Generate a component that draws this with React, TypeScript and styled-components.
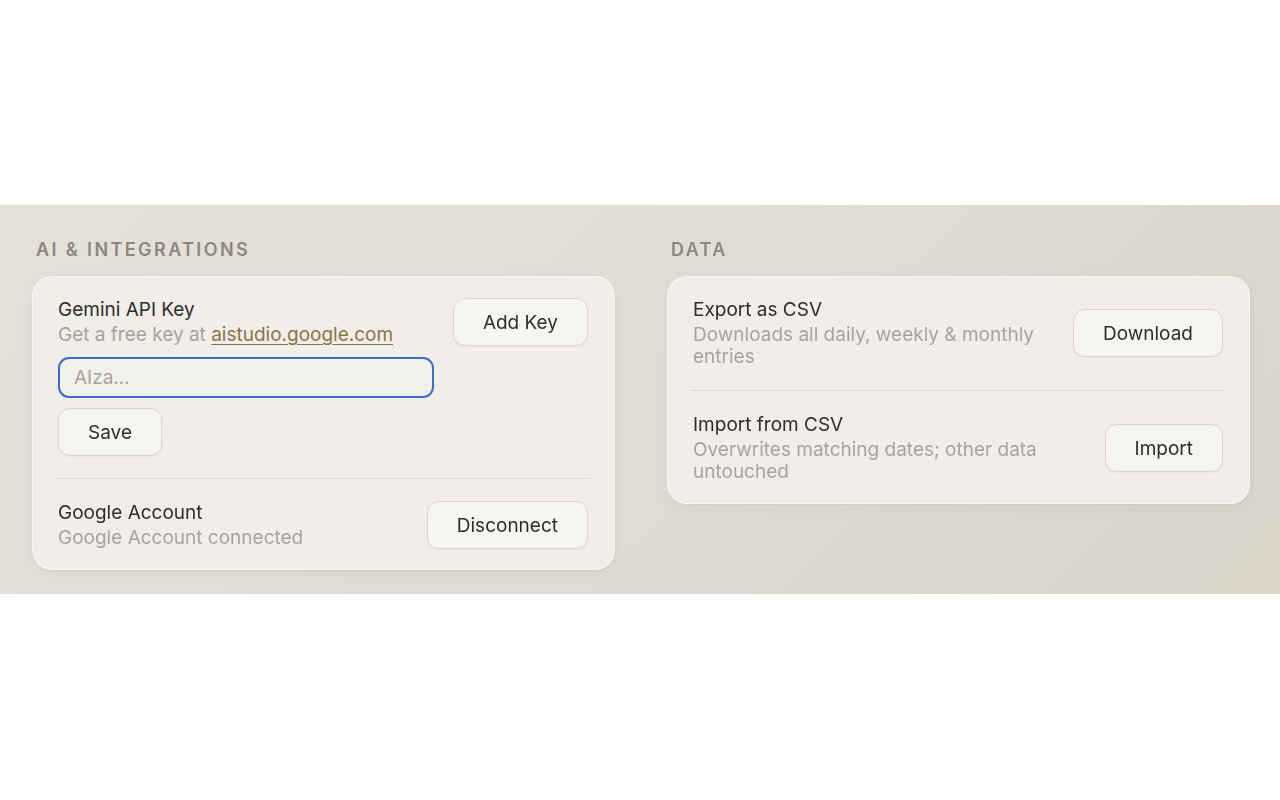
import React from 'react'
import styled, { createGlobalStyle } from 'styled-components'

const GlobalStyle = createGlobalStyle`
  html, body {
    margin: 0;
    padding: 0;
    background: #ffffff;
    font-family: 'Inter', 'Noto Sans', sans-serif;
    -webkit-font-smoothing: antialiased;
  }
  * {
    box-sizing: border-box;
  }
`

const Band = styled.section`
  margin-top: 205px;
  height: 389px;
  padding: 34px 30px 0 32px;
  background: linear-gradient(135deg, #e5e1da 0%, #e0dbd3 55%, #d9d3c8 100%);
  display: grid;
  grid-template-columns: 1fr 1fr;
  column-gap: 52px;
  align-items: start;
`

const Column = styled.div`
  display: flex;
  flex-direction: column;
`

const Heading = styled.h2`
  margin: 0 0 16px 4px;
  font-size: 18px;
  line-height: 21px;
  font-weight: 600;
  letter-spacing: 2.4px;
  text-transform: uppercase;
  color: #8b8782;
`

const Card = styled.div`
  background: #f1eeea;
  border-radius: 20px;
  padding: 21px 26px 20px 25px;
  box-shadow: 0 1px 2px rgba(120, 108, 90, 0.08), 0 4px 14px rgba(120, 108, 90, 0.06);
  border: 1px solid rgba(255, 255, 255, 0.5);
`

const Row = styled.div<{ $align?: string }>`
  display: flex;
  justify-content: space-between;
  align-items: ${(p) => p.$align || 'center'};
  gap: 20px;
`

const Info = styled.div`
  display: flex;
  flex-direction: column;
  min-width: 0;
`

const Title = styled.div`
  font-size: 19px;
  line-height: 24px;
  color: #2f2d2a;
  margin-bottom: 2px;
`

const Sub = styled.div`
  font-size: 19px;
  line-height: 22px;
  color: #a8a39c;
`

const Link = styled.a`
  color: #8b7547;
  text-decoration: underline;
  text-underline-offset: 3px;
`

const KeyInput = styled.input`
  width: 376px;
  height: 41px;
  margin-top: 11px;
  padding: 0 14px;
  border: 2px solid #3b6dcc;
  border-radius: 11px;
  background: #f3f1ed;
  font-family: inherit;
  font-size: 19px;
  color: #2f2d2a;
  outline: none;
  &::placeholder {
    color: #a8a39c;
  }
`

const Button = styled.button`
  flex-shrink: 0;
  height: 48px;
  padding: 0 29px;
  border: 1px solid #dcd7cf;
  border-radius: 12px;
  background: #f7f5f2;
  box-shadow: 0 1px 2px rgba(120, 108, 90, 0.08);
  font-family: inherit;
  font-size: 19px;
  color: #2f2d2a;
  cursor: pointer;
`

const SaveButton = styled(Button)`
  align-self: flex-start;
  margin-top: 10px;
`

const Divider = styled.hr<{ $gap: number }>`
  border: none;
  height: 1px;
  background: #dfdad3;
  margin: ${(p) => p.$gap}px -2px;
`

export default function App() {
  return (
    <>
      <GlobalStyle />
      <Band>
        <Column>
          <Heading>AI &amp; Integrations</Heading>
          <Card>
            <Row $align="flex-start">
              <Info>
                <Title>Gemini API Key</Title>
                <Sub>
                  Get a free key at <Link href="#">aistudio.google.com</Link>
                </Sub>
                <KeyInput placeholder="AIza…" autoFocus />
                <SaveButton>Save</SaveButton>
              </Info>
              <Button>Add Key</Button>
            </Row>
            <Divider $gap={22} />
            <Row>
              <Info>
                <Title>Google Account</Title>
                <Sub>Google Account connected</Sub>
              </Info>
              <Button>Disconnect</Button>
            </Row>
          </Card>
        </Column>
        <Column>
          <Heading>Data</Heading>
          <Card>
            <Row>
              <Info>
                <Title>Export as CSV</Title>
                <Sub>Downloads all daily, weekly &amp; monthly entries</Sub>
              </Info>
              <Button>Download</Button>
            </Row>
            <Divider $gap={22} />
            <Row>
              <Info>
                <Title>Import from CSV</Title>
                <Sub>Overwrites matching dates; other data untouched</Sub>
              </Info>
              <Button>Import</Button>
            </Row>
          </Card>
        </Column>
      </Band>
    </>
  )
}
